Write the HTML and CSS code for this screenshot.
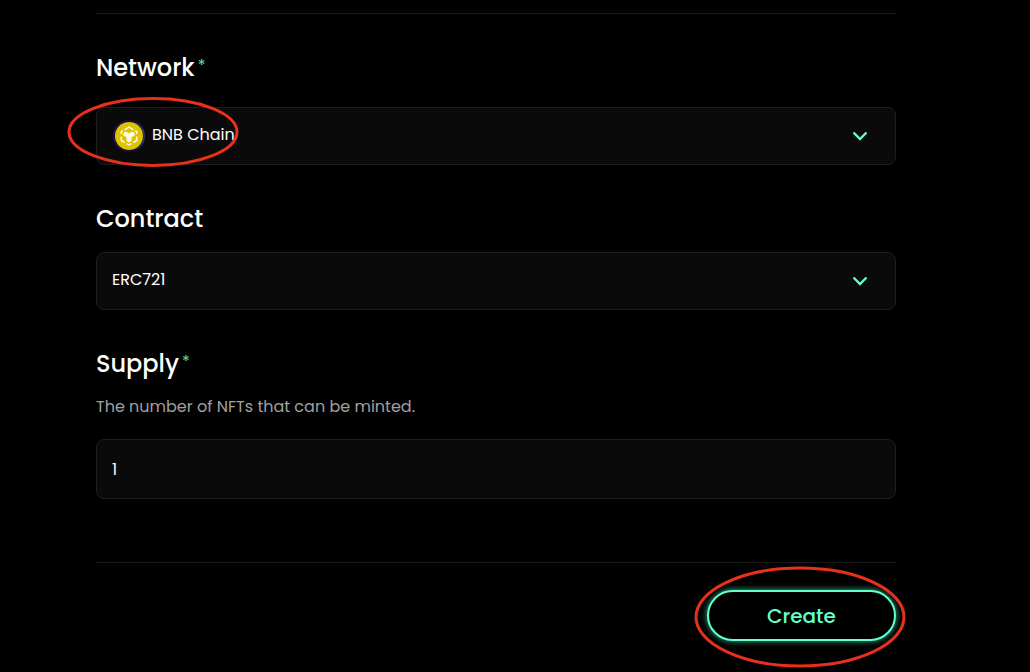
FILE: index.html
```html
<!DOCTYPE html>
<html lang="en">
<head>
<meta charset="utf-8">
<meta name="viewport" content="width=device-width, initial-scale=1">
<title>Create NFT</title>
<link rel="stylesheet" href="styles.css">
</head>
<body>
<form class="form">
  <div class="field field-network">
    <label class="label" for="network">Network<span class="required">*</span></label>
    <div class="control">
      <select class="box select select-with-icon" id="network">
        <option>BNB Chain</option>
      </select>
      <svg class="coin" viewBox="0 0 32 32" aria-hidden="true">
        <defs>
          <linearGradient id="ring" x1="0" y1="0" x2="1" y2="0">
            <stop offset="0" stop-color="#3a0862"/>
            <stop offset="0.6" stop-color="#160b3c"/>
            <stop offset="1" stop-color="#2b3f86"/>
          </linearGradient>
        </defs>
        <circle cx="16" cy="16" r="15.2" fill="#05030c" stroke="url(#ring)" stroke-width="1.4"/>
        <circle cx="16" cy="16" r="14" fill="#dcc400"/>
        <path fill="none" stroke="#fffbe0" stroke-width="1.5" d="M11.500 9.800 16 7.200l4.500 2.600M8.300 14v-2.400l1.600-.9M23.700 14v-2.400l-1.600-.9M8.300 16.500v4l3.400 2M23.700 16.500v4l-3.400 2M13.600 23.600l2.400 1.400 2.400-1.400"/>
        <path fill="#fffbe0" d="M10.300 12.800l2.400-1.400 3.300 1.900 3.300-1.900 2.400 1.400v2.600l-3.200 1.900v3.700L16 22.500l-2.500-1.500v-3.700l-3.200-1.900z"/>
      </svg>
      <svg class="chevron" viewBox="0 0 16 10" aria-hidden="true"><path d="M1.500 1.500 8 8l6.500-6.500"/></svg>
      <svg class="mark mark-network" viewBox="0 0 172 72" aria-hidden="true"><ellipse cx="86" cy="36" rx="84" ry="33.500"/></svg>
    </div>
  </div>

  <div class="field">
    <label class="label" for="contract">Contract</label>
    <div class="control">
      <select class="box select" id="contract">
        <option>ERC721</option>
      </select>
      <svg class="chevron" viewBox="0 0 16 10" aria-hidden="true"><path d="M1.500 1.500 8 8l6.500-6.500"/></svg>
    </div>
  </div>

  <div class="field field-supply">
    <label class="label" for="supply">Supply<span class="required">*</span></label>
    <p class="hint" id="supply-hint">The number of NFTs that can be minted.</p>
    <input class="box input" id="supply" type="text" inputmode="numeric" value="1" aria-describedby="supply-hint">
  </div>

  <div class="actions">
    <div class="control">
      <button class="create" type="button">Create</button>
      <svg class="mark mark-create" viewBox="0 0 212 102" aria-hidden="true"><ellipse cx="106" cy="51" rx="104" ry="49"/></svg>
    </div>
  </div>
</form>
</body>
</html>
```
FILE: styles.css
```css
* {
  box-sizing: border-box;
}

body {
  margin: 0;
  background: #000;
  color: #fff;
  font-family: Poppins, Inter, "Open Sans", sans-serif;
  font-size: 16px;
  line-height: 24px;
}

.form {
  display: flex;
  flex-direction: column;
  gap: 36px;
  margin: 13px 134px 0 96px;
  padding-top: 36px;
  border-top: 1px solid #191919;
}

.field {
  display: flex;
  flex-direction: column;
  gap: 15px;
}

.field-network {
  gap: 21px;
}

.field-supply {
  gap: 13px;
}

.label {
  display: flex;
  gap: 3px;
  font-size: 24px;
  font-weight: 500;
  line-height: 36px;
}

.required {
  color: #58e0b2;
  font-size: 16px;
  font-weight: 400;
  line-height: 32px;
}

.control {
  position: relative;
}

.box {
  display: block;
  width: 100%;
  border: 1px solid #1e1e1e;
  border-radius: 8px;
  background: #0a0a0a;
  color: #fff;
  font: inherit;
  outline: none;
}

.select {
  height: 58px;
  padding: 0 48px 2px 15px;
  appearance: none;
}

.select-with-icon {
  padding-left: 55px;
}

.input {
  height: 60px;
  padding: 0 15px;
}

.hint {
  margin: 0 0 7px;
  color: #a0a0a0;
}

.coin {
  position: absolute;
  top: 13px;
  left: 17px;
  width: 32px;
  height: 32px;
  pointer-events: none;
}

.chevron {
  position: absolute;
  top: 24px;
  right: 28px;
  width: 16px;
  height: 10px;
  fill: none;
  stroke: #64ffcb;
  stroke-width: 2.4;
  pointer-events: none;
}

.mark {
  position: absolute;
  fill: none;
  stroke: #e8301a;
  stroke-width: 3;
  pointer-events: none;
}

.mark-network {
  top: -11px;
  left: -29px;
  width: 172px;
  height: 72px;
}

.mark-create {
  top: -24px;
  left: -13px;
  width: 212px;
  height: 102px;
}

.actions {
  display: flex;
  justify-content: flex-end;
  margin-top: 27px;
  padding: 27px 0 31px;
  border-top: 1px solid #191919;
}

.create {
  display: block;
  width: 189px;
  height: 51px;
  padding: 0;
  border: 2px solid #64ffcb;
  border-radius: 26px;
  background: #000;
  box-shadow: 0 0 6px #38b78c;
  color: #64ffcb;
  font: inherit;
  font-size: 20px;
  font-weight: 500;
}
```
